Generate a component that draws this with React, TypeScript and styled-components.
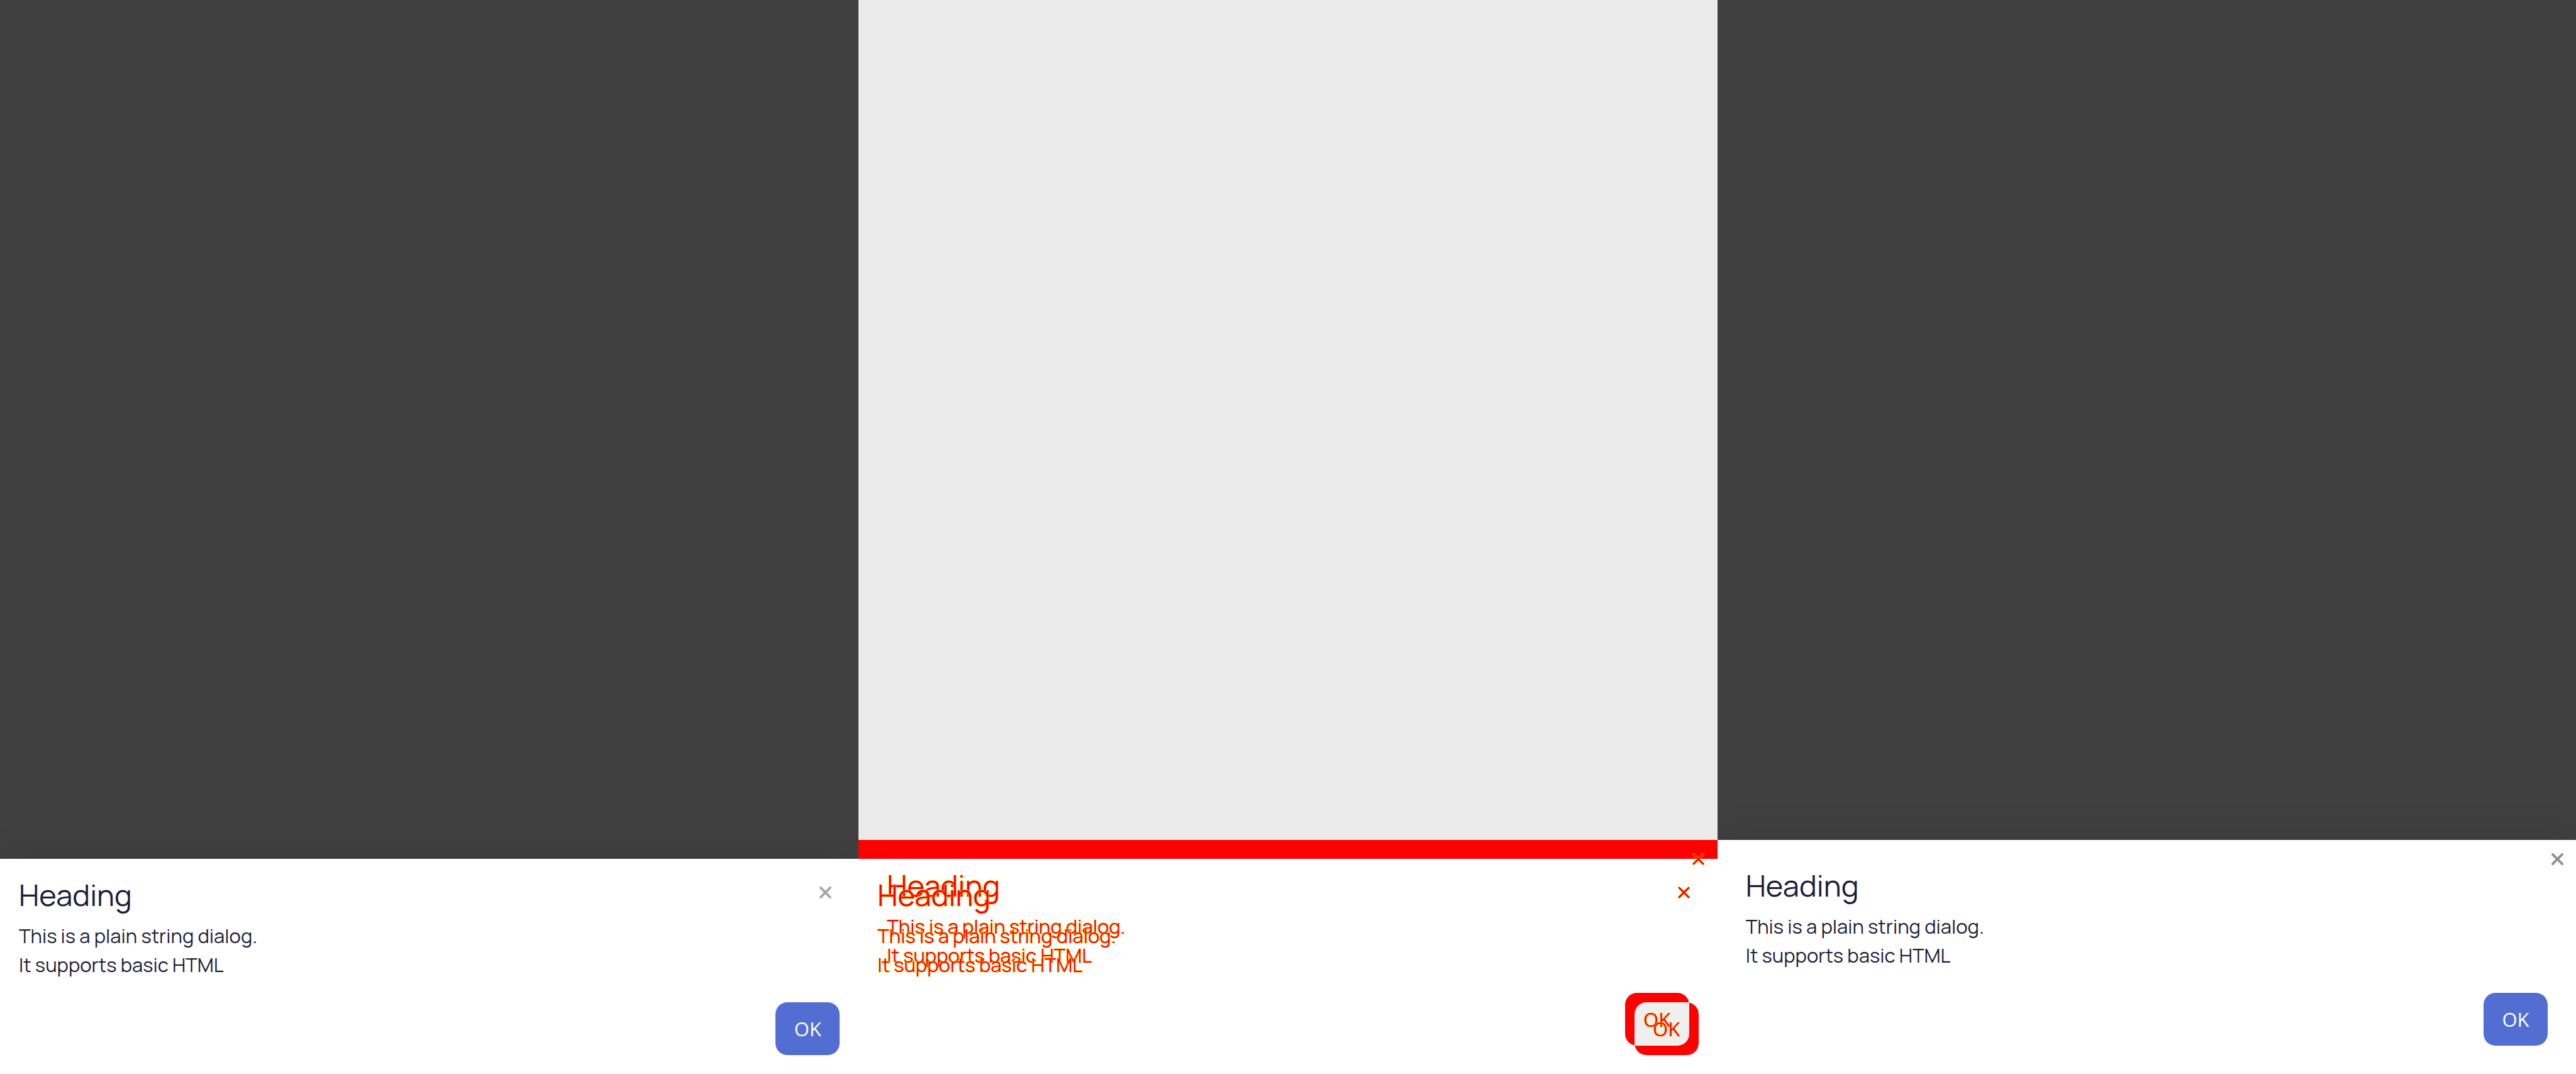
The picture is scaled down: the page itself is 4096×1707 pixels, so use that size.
import React from "react";
import styled, { createGlobalStyle } from "styled-components";

const GlobalStyle = createGlobalStyle`
  *, *::before, *::after { box-sizing: border-box; }
  body {
    margin: 0;
    background: #ffffff;
    color: #1b1d3a;
    font-family: Manrope, Inter, "Open Sans", sans-serif;
  }
`;

const Board = styled.main`
  display: grid;
  grid-template-columns: repeat(3, minmax(0, 1fr));
  min-height: 100vh;
`;

const Panel = styled.section<{ $tone: string }>`
  display: flex;
  flex-direction: column;
  justify-content: flex-end;
  overflow: hidden;
  background: ${(p) => p.$tone};
`;

const Overlay = styled.div`
  display: grid;
  border-top: 30px solid #ff0000;
  background: #ffffff;
`;

const Sheet = styled.div<{ $pad: number; $diff?: boolean; $raised?: boolean }>`
  position: relative;
  display: flex;
  flex-direction: column;
  padding: ${(p) => p.$pad}px;
  background: ${(p) => (p.$diff ? "transparent" : "#ffffff")};
  box-shadow: ${(p) => (p.$diff ? "none" : "0 0 60px rgba(0, 0, 0, 0.12)")};
  color: ${(p) => (p.$diff ? "#ff0000" : "inherit")};
  -webkit-text-stroke: ${(p) => (p.$diff ? "1px #ffee00" : "0")};
  paint-order: stroke fill;
  ${(p) => p.$diff && "grid-area: 1 / 1;"}
  ${(p) => p.$raised && "margin-top: -30px;"}
`;

const Title = styled.h2`
  margin: 0 0 15px;
  font-size: 47px;
  font-weight: 400;
  line-height: 54px;
`;

const Copy = styled.p`
  margin: 0 0 37px;
  font-size: 31px;
  font-weight: 400;
  line-height: 46px;
`;

const Actions = styled.div`
  display: flex;
  justify-content: flex-end;
`;

const OkButton = styled.button<{ $diff?: boolean }>`
  position: relative;
  width: 102px;
  height: 84px;
  padding: 0;
  border: 0;
  border-radius: 19px;
  background: ${(p) => (p.$diff ? "#ff0000" : "#526ed3")};
  color: ${(p) => (p.$diff ? "#ff0000" : "#ffffff")};
  font-family: "Open Sans", sans-serif;
  font-size: 31px;
  font-weight: 400;
  -webkit-text-stroke: inherit;
  cursor: pointer;
`;

const Shared = styled.span`
  position: absolute;
  inset: 0 15px 15px 0;
  border-radius: 19px 0;
  background: #efefef;
`;

const Label = styled.span`
  position: relative;
  z-index: 2;
`;

const CloseButton = styled.button<{ $inset: number; $ink: string }>`
  position: absolute;
  top: ${(p) => p.$inset}px;
  right: ${(p) => p.$inset}px;
  display: grid;
  place-items: center;
  width: 46px;
  height: 46px;
  padding: 0;
  border: 0;
  background: transparent;
  color: ${(p) => p.$ink};
  cursor: pointer;
`;

type DialogProps = {
  pad: number;
  closeInset: number;
  ink: string;
  diff?: boolean;
  raised?: boolean;
  shared?: boolean;
};

const CROSS = "M2 2 L18 18 M18 2 L2 18";

function Dialog({ pad, closeInset, ink, diff, raised, shared }: DialogProps) {
  return (
    <Sheet role="dialog" aria-label="Heading" $pad={pad} $diff={diff} $raised={raised}>
      <Title>Heading</Title>
      <Copy>
        This is a plain string dialog.
        <br />
        It supports basic HTML
      </Copy>
      <Actions>
        <OkButton type="button" $diff={diff}>
          {shared && <Shared />}
          <Label>OK</Label>
        </OkButton>
      </Actions>
      <CloseButton type="button" aria-label="Close" $inset={closeInset} $ink={ink}>
        <svg width="19" height="19" viewBox="0 0 20 20" fill="none" strokeLinecap="round" overflow="visible">
          {diff && <path d={CROSS} stroke="#ffee00" strokeWidth="4" />}
          <path d={CROSS} stroke="currentColor" strokeWidth={diff ? 3 : 4} />
        </svg>
      </CloseButton>
    </Sheet>
  );
}

export default function App() {
  return (
    <>
      <GlobalStyle />
      <Board>
        <Panel $tone="#404040">
          <Dialog pad={30} closeInset={30} ink="#a4a5b1" />
        </Panel>
        <Panel $tone="#eaeaea">
          <Overlay>
            <Dialog pad={45} closeInset={7} ink="#ff0000" diff raised />
            <Dialog pad={30} closeInset={30} ink="#ff0000" diff shared />
          </Overlay>
        </Panel>
        <Panel $tone="#404040">
          <Dialog pad={45} closeInset={7} ink="#8d8e9c" />
        </Panel>
      </Board>
    </>
  );
}
